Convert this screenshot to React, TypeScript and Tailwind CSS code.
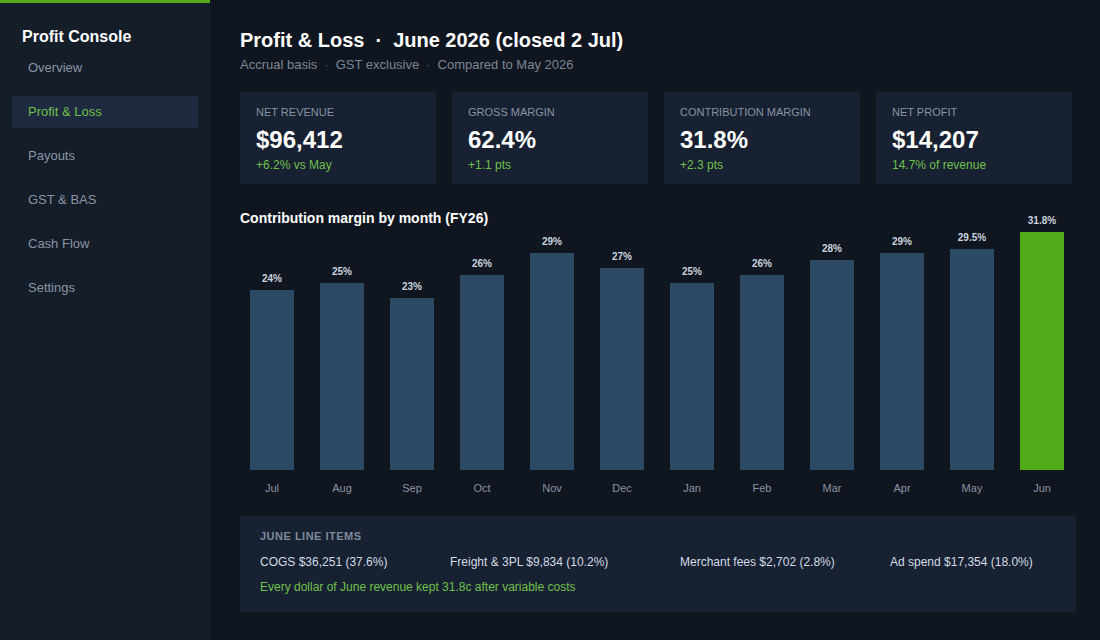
import React from "react";

const nav = ["Overview", "Profit & Loss", "Payouts", "GST & BAS", "Cash Flow", "Settings"];

const kpis = [
  { label: "Net revenue", value: "$96,412", sub: "+6.2% vs May" },
  { label: "Gross margin", value: "62.4%", sub: "+1.1 pts" },
  { label: "Contribution margin", value: "31.8%", sub: "+2.3 pts" },
  { label: "Net profit", value: "$14,207", sub: "14.7% of revenue" },
];

const months = [
  { m: "Jul", v: 24, t: "24%" },
  { m: "Aug", v: 25, t: "25%" },
  { m: "Sep", v: 23, t: "23%" },
  { m: "Oct", v: 26, t: "26%" },
  { m: "Nov", v: 29, t: "29%" },
  { m: "Dec", v: 27, t: "27%" },
  { m: "Jan", v: 25, t: "25%" },
  { m: "Feb", v: 26, t: "26%" },
  { m: "Mar", v: 28, t: "28%" },
  { m: "Apr", v: 29, t: "29%" },
  { m: "May", v: 29.5, t: "29.5%" },
  { m: "Jun", v: 31.8, t: "31.8%" },
];

const lineItems = [
  { text: "COGS $36,251 (37.6%)", w: "w-[190px]" },
  { text: "Freight & 3PL $9,834 (10.2%)", w: "w-[230px]" },
  { text: "Merchant fees $2,702 (2.8%)", w: "w-[210px]" },
  { text: "Ad spend $17,354 (18.0%)", w: "" },
];

export default function App() {
  return (
    <div
      className="flex w-[1100px] h-[640px] bg-[#10161f] overflow-hidden"
      style={{ fontFamily: '"Liberation Sans", Arial, sans-serif' }}
    >
      {/* Sidebar */}
      <aside className="w-[210px] shrink-0 bg-[#151d29] border-t-[3px] border-[#52aa19] px-3">
        <div className="pl-[10px] pt-[22px] text-[16px] leading-6 font-bold text-white">Profit Console</div>
        <nav className="mt-[3px] flex flex-col gap-3">
          {nav.map((n) => {
            const active = n === "Profit & Loss";
            return (
              <div
                key={n}
                className={`h-8 px-4 flex items-center text-[13px] ${
                  active ? "bg-[#1e2a3f] text-[#6fc04c]" : "text-[#8a94a4]"
                }`}
              >
                {n}
              </div>
            );
          })}
        </nav>
      </aside>

      {/* Main */}
      <main className="flex-1 pl-[30px] pt-[26px]">
        <h1 className="text-[20px] leading-7 font-bold text-white flex items-center">
          <span>Profit &amp; Loss</span>
          <span className="px-[11px]">·</span>
          <span>June 2026 (closed 2 Jul)</span>
        </h1>
        <div className="mt-[2px] text-[13px] leading-[18px] text-[#7b8696] flex items-center">
          <span>Accrual basis</span>
          <span className="mx-[7px] text-[#5b6676]">·</span>
          <span>GST exclusive</span>
          <span className="mx-[7px] text-[#5b6676]">·</span>
          <span>Compared to May 2026</span>
        </div>

        {/* KPI cards */}
        <div className="mt-[18px] flex gap-4">
          {kpis.map((k) => (
            <div key={k.label} className="w-[196px] h-[92px] bg-[#172131] px-4 pt-3">
              <div className="text-[11px] leading-4 uppercase text-[#8893a3]">{k.label}</div>
              <div className="mt-[5px] text-[24px] leading-[30px] font-bold text-white">{k.value}</div>
              <div className="mt-[2px] text-[12px] leading-4 text-[#6fc04c]">{k.sub}</div>
            </div>
          ))}
        </div>

        {/* Chart */}
        <div className="mt-[25px] text-[14px] leading-[18px] font-bold text-white">
          Contribution margin by month (FY26)
        </div>
        <div className="-mt-[13px] h-[256px] flex items-end gap-[26px] px-[10px]">
          {months.map((d) => (
            <div key={d.m} className="w-[44px] flex flex-col items-center justify-end">
              <div className="text-[10px] leading-3 font-bold text-[#c9d3df] whitespace-nowrap mb-[5px]">{d.t}</div>
              <div
                className={`w-[44px] ${d.m === "Jun" ? "bg-[#52aa19]" : "bg-[#2c4a63]"}`}
                style={{ height: `${d.v * 7.5}px` }}
              />
            </div>
          ))}
        </div>
        <div className="mt-[11px] flex gap-[26px] px-[10px]">
          {months.map((d) => (
            <div key={d.m} className="w-[44px] text-center text-[11px] leading-[14px] text-[#8893a3]">
              {d.m}
            </div>
          ))}
        </div>

        {/* Line items */}
        <div className="mt-[21px] w-[836px] bg-[#172131] px-5 pt-[13px] pb-[17px]">
          <div className="text-[11px] leading-[14px] font-bold tracking-[0.5px] uppercase text-[#7f8a9a]">
            June line items
          </div>
          <div className="mt-[11px] flex text-[12px] leading-4 text-[#d3dbe5]">
            {lineItems.map((l) => (
              <div key={l.text} className={`${l.w} shrink-0`}>
                {l.text}
              </div>
            ))}
          </div>
          <div className="mt-[9px] text-[12px] leading-4 text-[#6fc04c]">
            Every dollar of June revenue kept 31.8c after variable costs
          </div>
        </div>
      </main>
    </div>
  );
}
